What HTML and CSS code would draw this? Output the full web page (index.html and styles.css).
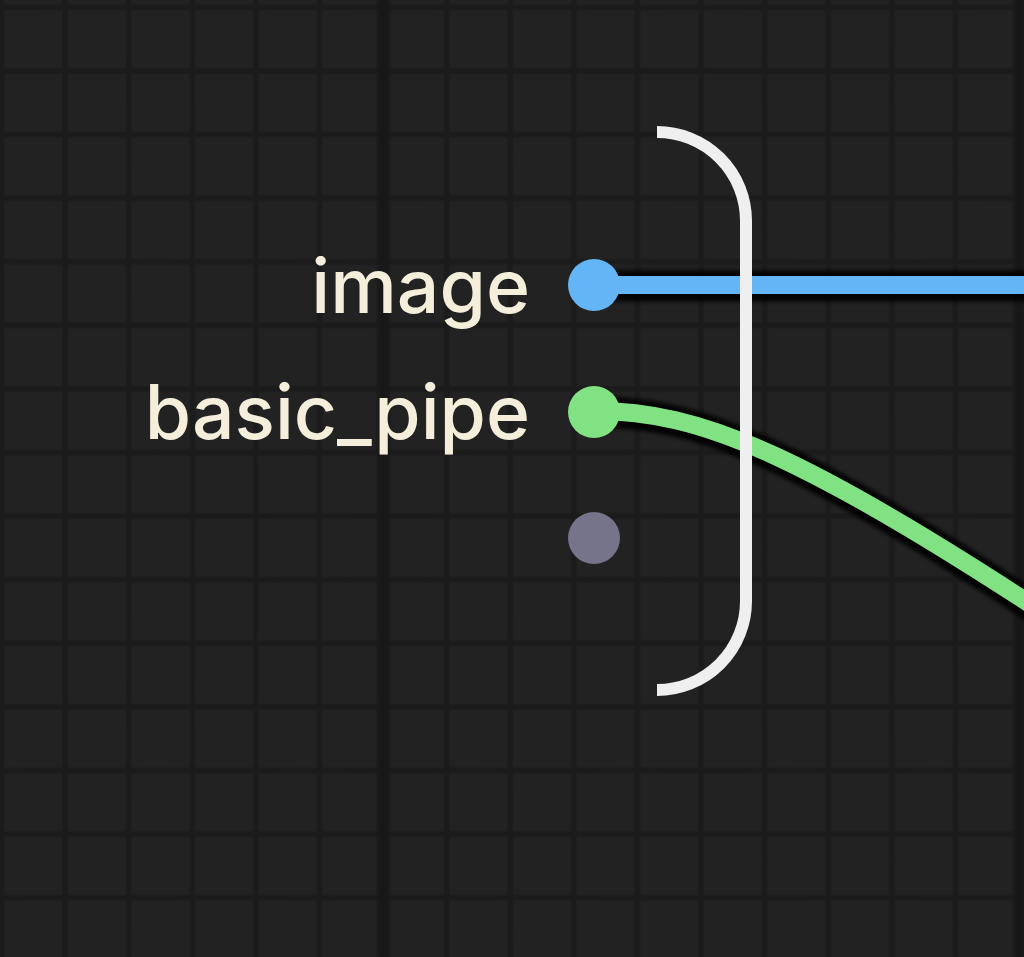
FILE: index.html
```html
<!DOCTYPE html>
<html lang="en">
<head>
<meta charset="utf-8">
<title>Node slots</title>
<link rel="stylesheet" href="styles.css">
</head>
<body>
<div class="canvas">
  <svg class="links" width="1024" height="957" viewBox="0 0 1024 957" xmlns="http://www.w3.org/2000/svg">
    <defs>
      <filter id="soft" x="-10%" y="-10%" width="120%" height="120%">
        <feGaussianBlur stdDeviation="2.2"/>
      </filter>
    </defs>
    <g class="link-shadow" filter="url(#soft)">
      <path d="M594 286 H1040"/>
      <path d="M594 412 C700 412, 800 451, 1100 651"/>
    </g>
    <path class="link link-image" d="M594 285 H1040"/>
    <path class="link link-pipe" d="M594 411 C700 411, 800 450, 1100 650"/>
    <path class="bracket" d="M657 132 A89 89 0 0 1 746 221 V601 A89 89 0 0 1 657 690"/>
  </svg>

  <div class="node">
    <div class="slot">
      <span class="label">image</span>
      <span class="dot dot-image"></span>
    </div>
    <div class="slot">
      <span class="label">basic_pipe</span>
      <span class="dot dot-pipe"></span>
    </div>
    <div class="slot">
      <span class="label"></span>
      <span class="dot dot-empty"></span>
    </div>
  </div>
</div>
</body>
</html>
```

FILE: styles.css
```css
html, body {
  margin: 0;
  padding: 0;
  background: #222222;
}

.canvas {
  position: relative;
  width: 1024px;
  height: 957px;
  overflow: hidden;
  background-color: #222222;
  background-image:
    linear-gradient(90deg, transparent 375px, #191919 379px, #171717 383.5px, #191919 388px, transparent 392px),
    linear-gradient(90deg, transparent 1011px, #191919 1015px, #171717 1019px, #191919 1023px, transparent 1028px),
    linear-gradient(90deg, transparent calc(50% - 4px), #1b1b1b calc(50% - 1.5px), #1b1b1b calc(50% + 1.5px), transparent calc(50% + 4px)),
    linear-gradient(180deg, transparent calc(50% - 4px), #1b1b1b calc(50% - 1.5px), #1b1b1b calc(50% + 1.5px), transparent calc(50% + 4px));
  background-size: 1024px 957px, 1024px 957px, 63.6px 63.6px, 63.6px 63.6px;
  background-repeat: no-repeat, no-repeat, repeat, repeat;
  background-position: 0 0, 0 0, 33.3px 0, 0 -24.4px;
  font-family: Inter, "Noto Sans", "Liberation Sans", sans-serif;
}

.links {
  position: absolute;
  left: 0;
  top: 0;
}

.link-shadow path {
  fill: none;
  stroke: #000000;
  stroke-opacity: 0.92;
  stroke-width: 31;
}

.link {
  fill: none;
  stroke-width: 18;
}

.link-image {
  stroke: #64b5f6;
}

.link-pipe {
  stroke: #80e283;
}

.bracket {
  fill: none;
  stroke: #efefef;
  stroke-width: 12;
}

.node {
  position: absolute;
  top: 222px;
  right: 404px;
  display: flex;
  flex-direction: column;
  align-items: flex-end;
}

.slot {
  display: flex;
  align-items: center;
  justify-content: flex-end;
  gap: 38px;
  height: 126.5px;
}

.label {
  font-size: 75px;
  font-weight: 500;
  line-height: 1;
  color: #f4eedb;
  white-space: nowrap;
}

.dot {
  width: 52px;
  height: 52px;
  border-radius: 50%;
  flex: none;
}

.dot-image {
  background: #64b5f6;
}

.dot-pipe {
  background: #80e283;
}

.dot-empty {
  background: #75748a;
}
```
